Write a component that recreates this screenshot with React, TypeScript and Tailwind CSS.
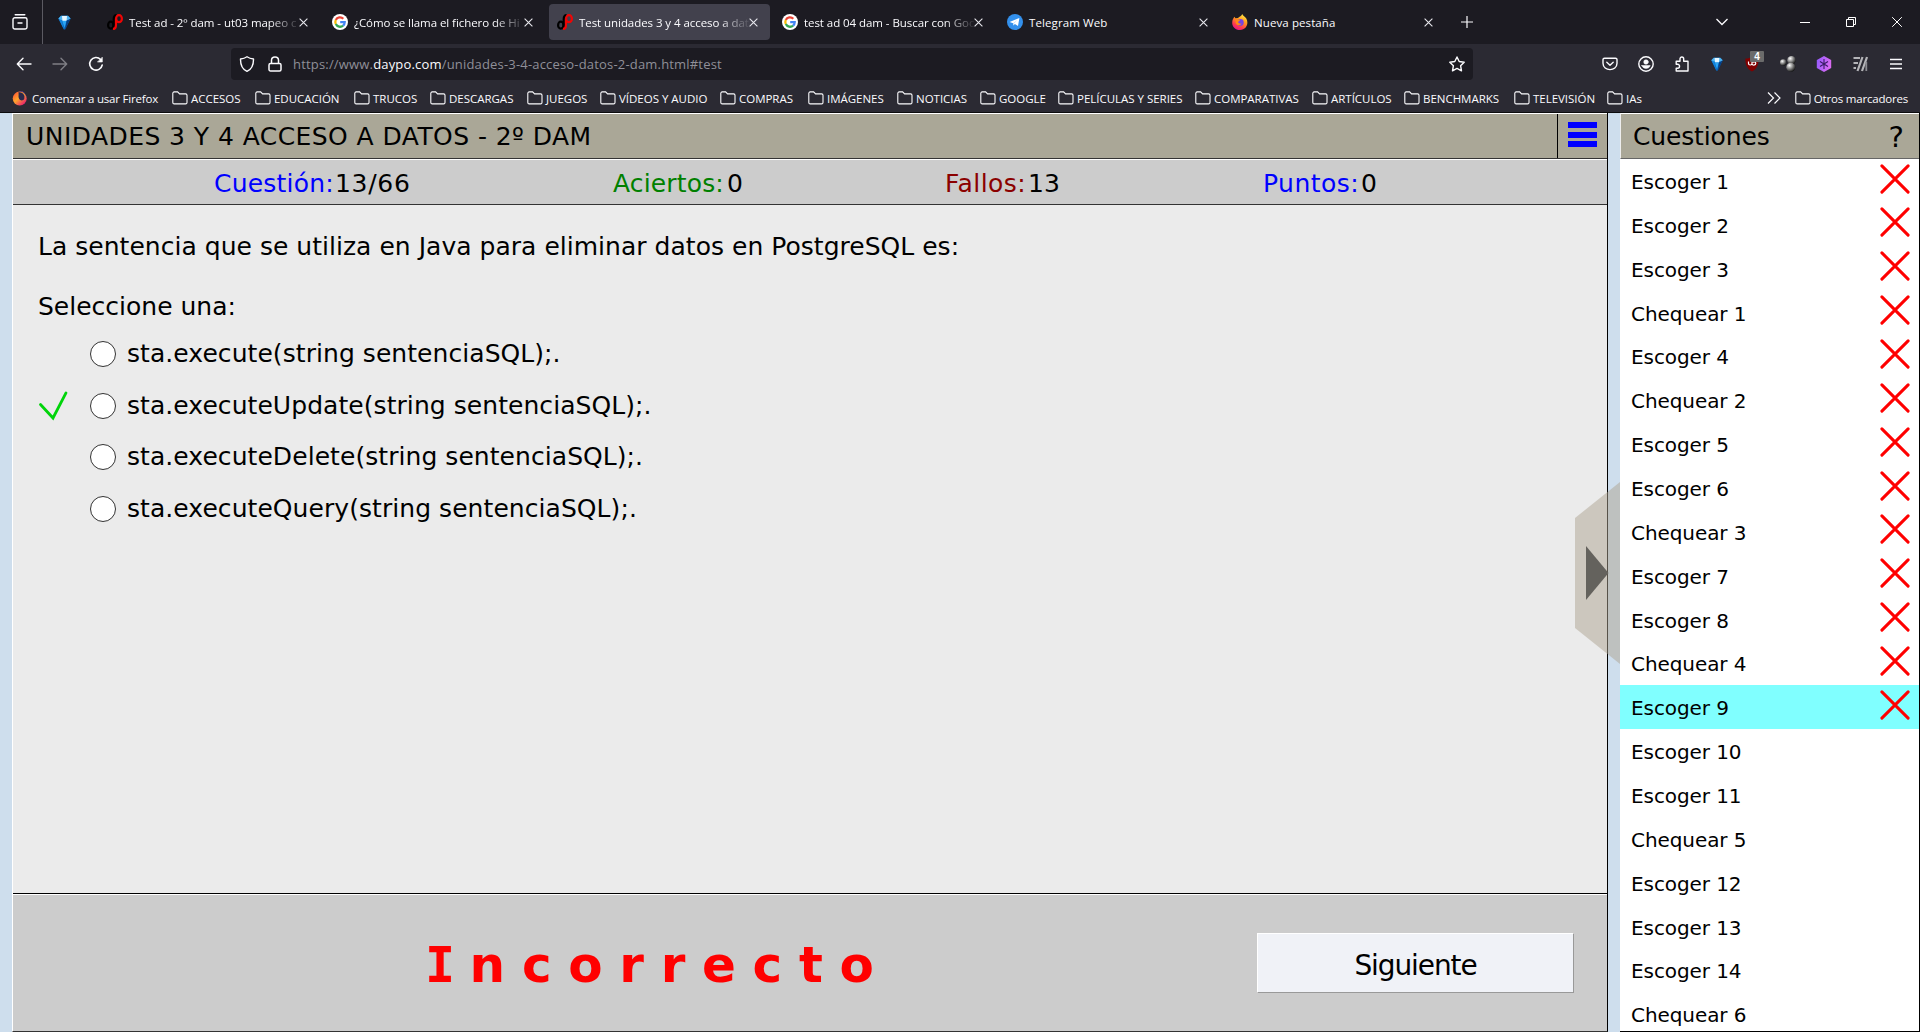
import type { ReactNode } from 'react';

/* ---------- icons ---------- */

const Diamond = ({ size = 15 }: { size?: number }) => (
  <svg width={size} height={size} viewBox="0 0 15 15">
    <path d="M4 .8H11L13.600 3.600L8.200 14.600H6.800L1.400 3.600Z" fill="#0a63b8" />
    <path d="M4 .8H11L13.600 3.600L12 5H3L1.400 3.600Z" fill="#4db4f2" />
    <path d="M5 1H10L9.600 6H5.400Z" fill="#e6f6ff" />
    <path d="M1.400 3.600L5 5.400L7 14.600Z" fill="#1183dd" />
    <path d="M5.200 5.800H9.600L7.500 13Z" fill="#2aa5f5" />
    <path d="M9.600 5.800L13.600 3.600L8.200 14.600Z" fill="#063f86" />
  </svg>
);

const Daypo = () => (
  <svg width="16" height="16" viewBox="0 0 16 16" fill="none" strokeWidth="2.200">
    <ellipse cx="3.800" cy="11.200" rx="2.700" ry="3.500" stroke="#000" />
    <path d="M6.700 15.500V5.500C6.700 2.600 8 1.100 9.600 1.100" stroke="#000" />
    <ellipse cx="12" cy="4.700" rx="2.900" ry="3.500" stroke="#f00505" />
    <path d="M9 4.500V11C9 13.800 8 15 6 15.200" stroke="#f00505" />
  </svg>
);

const Google = () => (
  <svg width="16" height="16" viewBox="0 0 16 16">
    <circle cx="8" cy="8" r="8" fill="#fff" />
    <g fill="none" strokeWidth="2.300">
      <path d="M11.300 4.700A4.700 4.700 0 0 0 3.800 5.900" stroke="#ea4335" />
      <path d="M3.800 5.900A4.700 4.700 0 0 0 3.800 10.100" stroke="#fbbc05" />
      <path d="M3.800 10.100A4.700 4.700 0 0 0 11.100 11.600" stroke="#34a853" />
      <path d="M11.100 11.600A4.700 4.700 0 0 0 12.700 8.200H8.200" stroke="#4285f4" />
    </g>
  </svg>
);

const Telegram = () => (
  <svg width="16" height="16" viewBox="0 0 16 16">
    <circle cx="8" cy="8" r="8" fill="#3390ec" />
    <path d="M2.600 7.900L12.400 4L11 12L7.900 10L6.400 11.600L6.100 9.200Z" fill="#fff" />
    <path d="M6.100 9.200L10.600 5.700L7 9.400L6.400 11.600Z" fill="#b9d8f7" />
  </svg>
);

const Firefox = () => (
  <svg width="16" height="16" viewBox="0 0 16 16">
    <defs>
      <linearGradient id="fx" x1=".8" y1="0" x2=".3" y2="1">
        <stop offset="0" stopColor="#fff14a" />
        <stop offset=".4" stopColor="#ff9a1f" />
        <stop offset=".75" stopColor="#ff3b4e" />
        <stop offset="1" stopColor="#e31587" />
      </linearGradient>
    </defs>
    <path d="M10.200 0C11 2 13 2.600 14.300 4.600C17 9 14.500 16 8 16C3 16 .2 12.600 .2 8.700C.2 6 1.300 4.400 2.400 2.800L3.400 4.200L6 4C7.400 2.600 9.800 2.200 10.200 0Z" fill="url(#fx)" />
    <circle cx="8.300" cy="8.400" r="3.400" fill="#7542e5" />
    <path d="M3.400 5L7.600 5.400C8.600 6.400 7 7.200 6 7.800C6 9 7.600 10 9.600 9.600C8 12.400 4 11.400 3.600 8.400Z" fill="#ff8a16" />
  </svg>
);

const FirefoxBookmark = () => (
  <svg width="16" height="16" viewBox="0 0 16 16">
    <defs>
      <linearGradient id="fb" x1="0" y1=".2" x2=".7" y2="1">
        <stop offset="0" stopColor="#ff5a36" />
        <stop offset=".45" stopColor="#ffa62b" />
        <stop offset="1" stopColor="#e8206c" />
      </linearGradient>
    </defs>
    <circle cx="7.700" cy="8.600" r="7" fill="url(#fb)" />
    <path d="M6.400 2.300A5 5 0 0 1 12.300 8.800C11.300 11.400 7.300 10.800 6.800 8C6.200 7 7 4.600 6.400 2.300Z" fill="#2b2a4c" />
    <path d="M5.800 1.500A6.600 6.600 0 0 1 14 9.600C15.600 5 11 -1 5.800 1.500Z" fill="#7446d8" />
  </svg>
);

const Folder = () => (
  <svg width="16" height="14" viewBox="0 0 16 14" fill="none" stroke="#fbfbfe" strokeWidth="1.100">
    <path d="M.8 11.500V2.300C.8 1.500 1.400.9 2.200.9H5.600L7.600 2.900H13.600C14.400 2.900 15 3.500 15 4.300V11.500C15 12.300 14.400 12.900 13.600 12.900H2.200C1.400 12.900.8 12.300.8 11.500Z" />
  </svg>
);

const Close = () => (
  <svg width="9" height="9" viewBox="0 0 9 9" stroke="#e8e8ee" strokeWidth="1.100">
    <path d="M.6.6L8.400 8.400M8.400.6L.6 8.400" />
  </svg>
);

/* 16px line icon in the toolbar's foreground colour */
const Line = ({ children, w = 1.4 }: { children: ReactNode; w?: number }) => (
  <svg width="16" height="16" viewBox="0 0 16 16" fill="none" stroke="#fbfbfe" strokeWidth={w} strokeLinecap="round" strokeLinejoin="round">
    {children}
  </svg>
);

const UBlock = () => (
  <div className="relative h-4 w-4">
    <svg width="16" height="16" viewBox="0 0 16 16">
      <path d="M8 .8C10 2.200 12.500 2.600 14.600 2.600C14.800 9 13 12.800 8 15.600C3 12.800 1.200 9 1.400 2.600C3.500 2.600 6 2.200 8 .8Z" fill="#800000" />
      <path d="M4.500 5.500V7.500C4.500 9.500 8 9.500 8 7.500V5.500M8 7.500C8 9.700 11.800 9.500 11.800 7.300C11.800 5.600 9.500 5.400 9 6.600" fill="none" stroke="#fff" strokeWidth="1.200" />
    </svg>
    <span className="absolute -top-[5px] left-[6px] flex h-[11px] w-[14px] items-center justify-center rounded-[1px] bg-[#6b6b6b] font-['Liberation_Sans'] text-[10px] font-bold leading-none text-white">
      4
    </span>
  </div>
);

const Spheres = () => (
  <svg width="16" height="16" viewBox="0 0 16 16">
    <defs>
      <radialGradient id="sp" cx=".35" cy=".3" r=".75">
        <stop offset="0" stopColor="#fff" />
        <stop offset=".4" stopColor="#a0a0a0" />
        <stop offset="1" stopColor="#111" />
      </radialGradient>
    </defs>
    <circle cx="3.200" cy="6.500" r="3.200" fill="url(#sp)" />
    <circle cx="11.500" cy="4.200" r="4.200" fill="url(#sp)" />
    <circle cx="10.800" cy="11.200" r="4.500" fill="url(#sp)" />
  </svg>
);

const Hexagon = () => (
  <svg width="16" height="16" viewBox="0 0 16 16">
    <defs>
      <linearGradient id="hx" x1="0" y1="0" x2="1" y2=".3">
        <stop offset="0" stopColor="#9059ff" />
        <stop offset="1" stopColor="#d96bf2" />
      </linearGradient>
    </defs>
    <path d="M8 0L15.200 4V12L8 16L.8 12V4Z" fill="url(#hx)" />
    <path d="M8 3V13M4 5.500L12 10.500M12 5.500L4 10.500" stroke="#3a1c66" strokeWidth="1.100" />
  </svg>
);

const Stripes = () => (
  <svg width="16" height="16" viewBox="0 0 16 16">
    <g stroke="#b4b4b8" strokeWidth="2.200">
      <path d="M1.500 2H8M1.500 7H6M1.500 12H4" />
      <path d="M10.500 1L5.500 15M15 1L10 15" />
    </g>
    <path d="M14.300 6V15" stroke="#8a8a90" strokeWidth="1.800" />
  </svg>
);

const Cross = () => (
  <svg width="30" height="30" viewBox="0 0 30 30" stroke="#f00" strokeWidth="3" strokeLinecap="round">
    <path d="M1.900 1.900L28.100 28.100M28.100 1.900L1.900 28.100" />
  </svg>
);

/* ---------- browser chrome ---------- */

const tabs = [
  { icon: <Daypo />, title: 'Test ad - 2º dam - ut03 mapeo c', fade: true },
  { icon: <Google />, title: '¿Cómo se llama el fichero de Hi', fade: true },
  { icon: <Daypo />, title: 'Test unidades 3 y 4 acceso a dat', fade: true, active: true },
  { icon: <Google />, title: 'test ad 04 dam - Buscar con Goo', fade: true },
  { icon: <Telegram />, title: 'Telegram Web' },
  { icon: <Firefox />, title: 'Nueva pestaña' },
];

function TabBar() {
  return (
    <div className="flex h-11 bg-[#1c1b22]">
      <div className="flex w-[43px] items-center border-r border-[#5b5a62] pl-3">
        <Line>
          <path d="M3.200 .8H12.800M2.800 3.800H13.200C14.200 3.800 15 4.500 15 5.500V13.300C15 14.300 14.200 15 13.200 15H2.800C1.800 15 1 14.300 1 13.300V5.500C1 4.500 1.800 3.800 2.800 3.800ZM6 9H10" />
        </Line>
      </div>
      <div className="flex w-14 items-center pl-[14px]">
        <Diamond />
      </div>
      {tabs.map((t, i) => (
        <div
          key={i}
          className={`mr-1 mt-1 flex h-9 w-[221px] shrink-0 items-center rounded-[4px] pl-2 ${t.active ? 'bg-[#42414d]' : ''}`}
        >
          {t.icon}
          <span
            className={`ml-1.5 w-[170px] whitespace-nowrap pt-[1px] ${t.fade ? 'tracking-[-0.06px] [mask-image:linear-gradient(to_right,#000_140px,transparent_172px)]' : 'tracking-[0.1px]'}`}
          >
            {t.title}
          </span>
          <Close />
        </div>
      ))}
      <div className="flex flex-1 items-center pl-[12px]">
        <svg width="12" height="12" viewBox="0 0 12 12" stroke="#fbfbfe" strokeWidth="1.200">
          <path d="M6 0V12M0 6H12" />
        </svg>
        <svg className="ml-auto mr-[72px]" width="12" height="8" viewBox="0 0 12 8" fill="none" stroke="#fbfbfe" strokeWidth="1.300">
          <path d="M.5 1L6 6.500L11.500 1" />
        </svg>
        <div className="mr-9 h-px w-[10px] bg-white" />
        <svg className="mr-9" width="10" height="10" viewBox="0 0 10 10" fill="none" stroke="#fff">
          <path d="M.5 2.500H7.500V9.500H.5ZM2.500 2.500V.5H9.500V7.500H7.500" />
        </svg>
        <svg className="mr-[18px]" width="10" height="10" viewBox="0 0 10 10" stroke="#fff">
          <path d="M.2.2L9.800 9.800M9.800.2L.2 9.800" />
        </svg>
      </div>
    </div>
  );
}

function Toolbar() {
  return (
    <div className="flex h-10 items-center bg-[#2b2a33]">
      <div className="flex w-[231px] items-center gap-5 pl-4">
        <Line>
          <path d="M15 8H1.500M7 2.300L1.300 8L7 13.700" />
        </Line>
        <span className="opacity-40">
          <Line>
            <path d="M1 8H14.500M9 2.300L14.700 8L9 13.700" />
          </Line>
        </span>
        <Line w={1.6}>
          <path d="M14.200 9A6.300 6.300 0 1 1 12.600 3.500" />
          <path d="M14.300 1.500V6H9.800Z" fill="#fbfbfe" strokeWidth=".6" />
        </Line>
      </div>
      <div className="flex h-8 w-[1242px] items-center rounded bg-[#1c1b22] pl-2">
        <Line>
          <path d="M8 .8C10 2.200 12.300 2.800 14.500 3C14.600 9 12.500 13.300 8 15.300C3.500 13.300 1.400 9 1.500 3C3.700 2.800 6 2.200 8 .8Z" />
        </Line>
        <span className="ml-[12px]">
          <Line w={1.5}>
            <path d="M3.500 7.500H12.500C13.300 7.500 14 8.200 14 9V13.500C14 14.300 13.300 15 12.500 15H3.500C2.700 15 2 14.300 2 13.500V9C2 8.200 2.700 7.500 3.500 7.500ZM4.500 7.300V4.300C4.500 -.2 11.500 -.2 11.500 4.300V7.300" />
          </Line>
        </span>
        <span className="ml-[10px] pt-[2px] text-[13px] tracking-[0.18px] text-[#8f8f98]">
          https://www.<span className="text-[#fbfbfe]">daypo.com</span>/unidades-3-4-acceso-datos-2-dam.html#test
        </span>
        <span className="ml-auto mr-2">
          <Line>
            <path d="M8 1L10.200 5.500L15.200 6.200L11.600 9.700L12.500 14.800L8 12.400L3.500 14.800L4.400 9.700L.8 6.200L5.800 5.500Z" />
          </Line>
        </span>
      </div>
      <div className="ml-auto mr-4 flex items-center gap-5">
        <Line>
          <path d="M2.500 2.200H13.500C14.300 2.200 15 2.800 15 3.600V7.300C15 15.700 1 15.700 1 7.300V3.600C1 2.800 1.700 2.200 2.500 2.200ZM4.800 6.300L8 9.300L11.200 6.300" />
        </Line>
        <Line>
          <circle cx="8" cy="8" r="7.200" />
          <circle cx="8" cy="6" r="2.300" fill="#fbfbfe" strokeWidth=".5" />
          <path d="M3.800 9.500H12.200C11.400 13.400 4.600 13.400 3.800 9.500Z" fill="#fbfbfe" strokeWidth=".5" />
        </Line>
        <Line>
          <path d="M2.200 8.300V5.200H6V3C6 .3 9.700 .3 9.700 3V5.200H14V15H2.200V12.300H3.600C6.200 12.300 6.200 8.300 3.600 8.300Z" />
        </Line>
        <Diamond size={14} />
        <UBlock />
        <Spheres />
        <Hexagon />
        <Stripes />
        <svg width="16" height="16" viewBox="0 0 16 16" stroke="#fbfbfe" strokeWidth="1.300">
          <path d="M2 3.500H14M2 8H14M2 12.500H14" />
        </svg>
      </div>
    </div>
  );
}

const bookmarks = [
  { name: 'ACCESOS', box: 'w-[83px]' },
  { name: 'EDUCACIÓN', box: 'w-[99px]' },
  { name: 'TRUCOS', box: 'w-[76px]' },
  { name: 'DESCARGAS', box: 'w-[97px]' },
  { name: 'JUEGOS', box: 'w-[73px]' },
  { name: 'VÍDEOS Y AUDIO', box: 'w-[120px]' },
  { name: 'COMPRAS', box: 'w-[88px]' },
  { name: 'IMÁGENES', box: 'w-[89px]' },
  { name: 'NOTICIAS', box: 'w-[83px]' },
  { name: 'GOOGLE', box: 'w-[78px]' },
  { name: 'PELÍCULAS Y SERIES', box: 'w-[137px]' },
  { name: 'COMPARATIVAS', box: 'w-[117px]' },
  { name: 'ARTÍCULOS', box: 'w-[92px]' },
  { name: 'BENCHMARKS', box: 'w-[110px]' },
  { name: 'TELEVISIÓN', box: 'w-[93px]' },
  { name: 'IAs', box: 'w-[60px]' },
];

function Bookmarks() {
  return (
    <div className="flex h-[29px] items-start border-b border-[#0c0c0d] bg-[#2b2a33] pt-[5px]">
      <div className="flex h-[18px] w-[172px] items-center gap-1 pl-3 tracking-[-0.2px]">
        <FirefoxBookmark />
        <span className="pt-px">Comenzar a usar Firefox</span>
      </div>
      {bookmarks.map((b) => (
        <div key={b.name} className={`flex h-[18px] items-center gap-[3px] whitespace-nowrap tracking-[-0.02px] ${b.box}`}>
          <Folder />
          <span className="pt-px">{b.name}</span>
        </div>
      ))}
      <div className="ml-auto mr-3 flex h-[18px] items-center tracking-[-0.2px]">
        <svg className="mr-[14px]" width="14" height="12" viewBox="0 0 14 12" fill="none" stroke="#fbfbfe" strokeWidth="1.200">
          <path d="M1 .5L6.500 6L1 11.500M7.500 .5L13 6L7.500 11.500" />
        </svg>
        <Folder />
        <span className="ml-[3px] pt-px">Otros marcadores</span>
      </div>
    </div>
  );
}

/* ---------- quiz ---------- */

const answers = [
  { text: 'sta.execute(string sentenciaSQL);.' },
  { text: 'sta.executeUpdate(string sentenciaSQL);.', correct: true },
  { text: 'sta.executeDelete(string sentenciaSQL);.' },
  { text: 'sta.executeQuery(string sentenciaSQL);.' },
];

function Quiz() {
  return (
    <main className="flex w-[1596px] flex-col border-b border-l border-r border-b-[#333] border-l-white border-r-black text-[25px] leading-[30px]">
      <header className="flex h-[46px] border-b border-t border-b-[#333] border-t-white bg-[#aaa797]">
        <h1 className="flex-1 pl-[13px] pt-[8px] tracking-[0.440px]">UNIDADES 3 Y 4 ACCESO A DATOS - 2º DAM</h1>
        <button className="flex w-[50px] flex-col gap-[3.500px] border-l border-black pl-[10px] pt-[8px]">
          <span className="h-[6px] w-[29px] bg-[#0000ff]" />
          <span className="h-[6px] w-[29px] bg-[#0000ff]" />
          <span className="h-[6px] w-[29px] bg-[#0000ff]" />
        </button>
      </header>
      <div className="flex h-[46px] border-b border-t border-b-[#333] border-t-white bg-[#ccc] pl-[201px] pt-[9px]">
        <p className="flex w-[399px]">
          <span className="w-[121px] tracking-[0.200px] text-[#0000ff]">Cuestión:</span>
          <span className="tracking-[0.700px]">13/66</span>
        </p>
        <p className="flex w-[332px]">
          <span className="w-[114px] tracking-[0.150px] text-[#008000]">Aciertos:</span>
          <span>0</span>
        </p>
        <p className="flex w-[318px]">
          <span className="w-[83px] tracking-[0.450px] text-[#8b0000]">Fallos:</span>
          <span>13</span>
        </p>
        <p className="flex">
          <span className="w-[98px] tracking-[0.450px] text-[#0000ff]">Puntos:</span>
          <span>0</span>
        </p>
      </div>
      <section className="h-[688px] bg-[#ebebeb] pl-[25px] pt-[27px]">
        <p className="tracking-[0.025px]">La sentencia que se utiliza en Java para eliminar datos en PostgreSQL es:</p>
        <p className="mt-[30px]">Seleccione una:</p>
        <ul className="mt-[6px]">
          {answers.map((a) => (
            <li key={a.text} className="flex h-[51.700px] items-center tracking-[0.060px]">
              <span className="w-[52px]">
                {a.correct && (
                  <svg width="30" height="30" viewBox="0 0 30 30" fill="none" stroke="#00d40a" strokeWidth="2.800" strokeLinecap="round">
                    <path d="M2.500 13.500L15 27L28 1.900" />
                  </svg>
                )}
              </span>
              <span className="h-[26px] w-[26px] rounded-full border border-[#333] bg-white" />
              <span className="ml-[11px]">{a.text}</span>
            </li>
          ))}
        </ul>
      </section>
      <footer className="flex flex-1 items-start border-t border-black bg-[#ccc] shadow-[inset_0_1px_0_#fff]">
        <p className="ml-[412px] mt-[41px] w-[832px] text-[50px] font-bold leading-[60px] tracking-[16.700px] text-[#f00]">
          <span className="font-['DejaVu_Sans_Mono'] tracking-[14.500px]">I</span>ncorrecto
        </p>
        <button className="mt-[39px] h-[60px] w-[317px] border border-b-[#999] border-l-white border-r-[#999] border-t-white bg-[#f0f2f7] pt-[5px] text-[28px] leading-[34px] tracking-[-1.100px]">
          Siguiente
        </button>
      </footer>
    </main>
  );
}

const questions = [
  'Escoger 1', 'Escoger 2', 'Escoger 3', 'Chequear 1', 'Escoger 4', 'Chequear 2', 'Escoger 5',
  'Escoger 6', 'Chequear 3', 'Escoger 7', 'Escoger 8', 'Chequear 4', 'Escoger 9', 'Escoger 10',
  'Escoger 11', 'Chequear 5', 'Escoger 12', 'Escoger 13', 'Escoger 14', 'Chequear 6',
];

function Sidebar() {
  return (
    <aside className="flex w-[300px] flex-col overflow-hidden border-b border-r border-black bg-white">
      <header className="flex h-[46px] shrink-0 justify-between border-b border-l border-t border-b-[#666] border-l-[#eee] border-t-white bg-[#aaa797] pl-[12px] pr-[15px] pt-[8px] text-[25px] leading-[30px]">
        <h2 className="tracking-[-0.150px]">Cuestiones</h2>
        <span className="text-[29px]">?</span>
      </header>
      <ul className="h-0 flex-1">
        {questions.map((q, i) => (
          <li
            key={q}
            className={`flex h-[43.860px] items-start justify-between pl-[11px] pr-[9px] text-[20px] leading-[46px] tracking-[-0.080px] ${i === 12 ? 'bg-[#80ffff]' : ''}`}
          >
            <span>{q}</span>
            {i < 13 && (
              <span className="pt-[4.500px]">
                <Cross />
              </span>
            )}
          </li>
        ))}
      </ul>
    </aside>
  );
}

export default function App() {
  return (
    <div className="flex h-[1032px] w-[1920px] flex-col overflow-hidden">
      <div className="font-['Open_Sans',sans-serif] text-[11.500px] text-[#fbfbfe]">
        <TabBar />
        <Toolbar />
        <Bookmarks />
      </div>
      <div className="relative flex h-[919px] justify-between bg-[#cedeed] pl-3 font-['DejaVu_Sans',sans-serif] text-black">
        <Quiz />
        <Sidebar />
        {/* collapse handle overlapping the quiz edge */}
        <svg className="absolute left-[1575px] top-[369px]" width="45" height="182" viewBox="0 0 45 182">
          <path d="M0 36L45 0V182L0 146Z" fill="#ada391" fillOpacity=".5" />
          <path d="M11 64L33.500 91L11 118Z" fill="#64625d" />
        </svg>
      </div>
    </div>
  );
}
